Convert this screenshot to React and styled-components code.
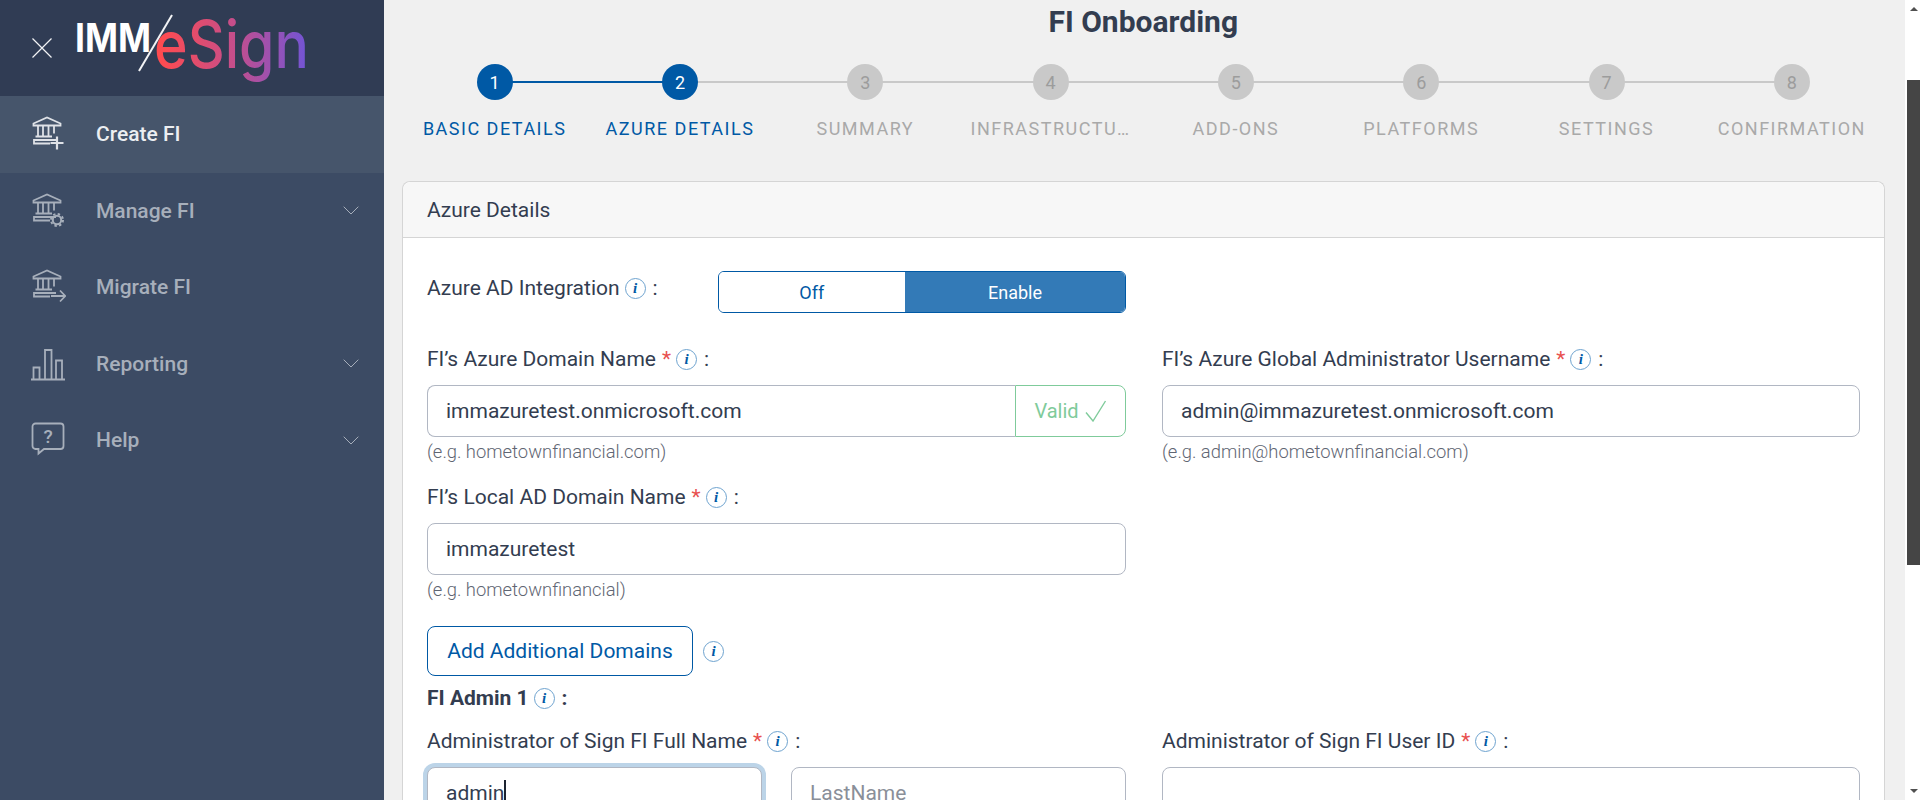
import React from 'react';
import styled, { createGlobalStyle } from 'styled-components';

const GlobalStyle = createGlobalStyle`
  html, body {
    margin: 0;
    height: 100%;
    overflow: hidden;
    background: #f0f0f0;
    font-family: Roboto, "Liberation Sans", sans-serif;
  }
  * {
    box-sizing: border-box;
  }
`;

const Shell = styled.div`
  display: flex;
  height: 800px;
  overflow: hidden;
`;

const Sidebar = styled.aside`
  width: 384px;
  flex-shrink: 0;
  background: #3c4b64;
`;

const SidebarHeader = styled.div`
  height: 96px;
  display: flex;
  align-items: center;
  padding-left: 32px;
  background: #303c54;
`;

const Logo = styled.svg`
  display: block;
  margin-left: 18px;
  overflow: visible;
`;

const NavItem = styled.div`
  height: 76.5px;
  display: flex;
  align-items: center;
  padding: 0 25px 0 30px;
  font-size: 21px;
  font-weight: 500;
  color: ${p => (p.$active ? '#eceef1' : '#a7afbb')};
  background: ${p => (p.$active ? '#46556b' : 'transparent')};
`;

const NavIcon = styled.span`
  width: 66px;
  height: 36px;
  flex-shrink: 0;
  display: flex;
  align-items: center;
`;

const NavChevron = styled.svg`
  margin-left: auto;
`;

const Main = styled.main`
  flex: 1;
  min-width: 0;
  padding: 0 20.5px 0 18px;
  overflow: hidden;
`;

const Title = styled.h1`
  margin: 0;
  height: 64px;
  padding-top: 4px;
  text-align: center;
  font-size: 30px;
  line-height: 36px;
  font-weight: 700;
  color: #333d50;
`;

const Stepper = styled.div`
  display: grid;
  grid-template-columns: repeat(8, 1fr);
  height: 117px;
`;

const Step = styled.div`
  position: relative;
  display: flex;
  flex-direction: column;
  align-items: center;
  min-width: 0;

  &:not(:last-child)::after {
    content: '';
    position: absolute;
    top: 17px;
    left: 50%;
    width: 100%;
    height: 2px;
    background: ${p => (p.$lineDone ? '#0059a5' : '#c9c9c9')};
  }
`;

const StepCircle = styled.div`
  position: relative;
  z-index: 1;
  width: 36px;
  height: 36px;
  border-radius: 50%;
  display: flex;
  align-items: center;
  justify-content: center;
  font-size: 18px;
  background: ${p => (p.$done ? '#0059a5' : '#c9c9c9')};
  color: ${p => (p.$done ? '#ffffff' : '#9c9c9c')};
`;

const StepLabel = styled.div`
  margin-top: 17px;
  white-space: nowrap;
  font-size: 18px;
  line-height: 24px;
  letter-spacing: 1.5px;
  color: ${p => (p.$done ? '#0059a5' : '#a9a9a9')};
`;

const Card = styled.section`
  background: #ffffff;
  border: 1px solid #d5d5d5;
  border-bottom: 0;
  border-radius: 8px 8px 0 0;
`;

const CardHeader = styled.div`
  height: 56px;
  display: flex;
  align-items: center;
  padding-left: 24px;
  font-size: 21px;
  color: #333d50;
  background: #f7f7f7;
  border-bottom: 1px solid #d5d5d5;
  border-radius: 8px 8px 0 0;
`;

const CardBody = styled.div`
  padding: 33px 23px 0 24px;
`;

const ToggleRow = styled.div`
  display: flex;
  align-items: flex-start;
  margin-bottom: 34px;
`;

const ToggleLabel = styled.div`
  width: 290.5px;
  display: flex;
  align-items: center;
  height: 34px;
  font-size: 21px;
  color: #333d50;
`;

const Toggle = styled.div`
  display: flex;
  height: 42px;
  width: 408.5px;
  border: 1px solid #0059a5;
  border-radius: 6px;
  overflow: hidden;
`;

const ToggleOption = styled.div`
  width: ${p => (p.$on ? '220.5px' : '187px')};
  display: flex;
  align-items: center;
  justify-content: center;
  font-size: 18px;
  background: ${p => (p.$on ? '#337ab7' : '#ffffff')};
  color: ${p => (p.$on ? '#ffffff' : '#0059a5')};
`;

const FieldGrid = styled.div`
  display: grid;
  grid-template-columns: 699px 698px;
  column-gap: 36px;
  row-gap: 21px;
`;

const Label = styled.div`
  display: flex;
  align-items: center;
  height: 24px;
  margin-bottom: 14px;
  font-size: 21px;
  font-weight: ${p => (p.$bold ? 700 : 400)};
  color: #333d50;
  white-space: nowrap;
`;

const Required = styled.span`
  margin-left: 6px;
  color: #e8514f;
`;

const InfoBadge = styled.span`
  width: 21px;
  height: 21px;
  margin: 0 7px 0 5px;
  flex-shrink: 0;
  display: inline-flex;
  align-items: center;
  justify-content: center;
  border: 1px solid #6ea3cf;
  border-radius: 50%;
  font-family: "Liberation Serif", serif;
  font-size: 15px;
  font-style: italic;
  font-weight: 700;
  color: #0059a5;
`;

const Input = styled.div`
  flex: 1;
  height: 52px;
  display: flex;
  align-items: center;
  padding: 0 18px;
  font-size: 21px;
  color: ${p => (p.$placeholder ? '#8a8f99' : '#333d50')};
  background: #ffffff;
  border: 1px solid #b1b7c3;
  border-radius: 8px;
  box-shadow: ${p => (p.$focused ? '0 0 0 4px #bcd4e8' : 'none')};
`;

const InputGroup = styled.div`
  display: flex;
  height: 52px;

  ${Input} {
    border-right: 0;
    border-radius: 8px 0 0 8px;
  }
`;

const ValidAddon = styled.div`
  width: 111px;
  display: flex;
  align-items: center;
  justify-content: center;
  gap: 6px;
  font-size: 20px;
  color: #7fcb9b;
  border: 1px solid #7fcb9b;
  border-radius: 0 8px 8px 0;
`;

const Hint = styled.div`
  margin-top: 3px;
  font-size: 18.4px;
  line-height: 24px;
  font-weight: 300;
  color: #5f6673;
`;

const ButtonRow = styled.div`
  display: flex;
  align-items: center;
  margin-top: 24px;
`;

const OutlineButton = styled.button`
  width: 266px;
  height: 50px;
  padding: 0;
  font-family: inherit;
  font-size: 21px;
  color: #0059a5;
  background: #ffffff;
  border: 1px solid #0059a5;
  border-radius: 8px;
`;

const ButtonInfo = styled(InfoBadge)`
  margin-left: 10px;
`;

const SectionTitle = styled(Label)`
  margin: 10px 0 19px;
`;

const NameInputs = styled.div`
  display: flex;
  gap: 29px;
`;

const Caret = styled.span`
  width: 2px;
  height: 26px;
  background: #1d2430;
`;

const ScrollTrack = styled.div`
  width: 15px;
  flex-shrink: 0;
  display: flex;
  flex-direction: column;
  align-items: flex-end;
  background: #ffffff;
`;

const ScrollArrow = styled.div`
  width: 13px;
  height: ${p => (p.$down ? '235px' : '80px')};
  display: flex;
  justify-content: center;
  align-items: ${p => (p.$down ? 'flex-end' : 'flex-start')};
  padding: 7px 0;

  &::before {
    content: '';
    border-left: 4px solid transparent;
    border-right: 4px solid transparent;
    ${p => (p.$down ? 'border-top: 4px solid #505050;' : 'border-bottom: 4px solid #505050;')}
  }
`;

const ScrollThumb = styled.div`
  width: 13px;
  height: 485px;
  background: #454545;
`;

const BankBase = () => (
  <>
    <path d="M3.500 7.500 17 1.500l13.500 6v2h-27z" />
    <path d="M8 9.500v11M13 9.500v11M18.500 9.500v11M24 9.500v8M5.500 20.500H22" />
    <path d="M26 24H4v3.500h16" />
  </>
);

const IconFrame = ({ children, color }) => (
  <svg width="36" height="36" viewBox="0 0 36 36" fill="none" stroke={color} strokeWidth="1.8">
    {children}
  </svg>
);

const CreateIcon = ({ color }) => (
  <IconFrame color={color}>
    <BankBase />
    <path d="M27 20.500v13M20.500 27h13" strokeWidth="2.200" />
  </IconFrame>
);

const ManageIcon = ({ color }) => (
  <IconFrame color={color}>
    <BankBase />
    <circle cx="27" cy="27" r="4.200" strokeWidth="2" />
    <circle cx="27" cy="27" r="6" strokeWidth="2" strokeDasharray="2.400 2.310" />
  </IconFrame>
);

const MigrateIcon = ({ color }) => (
  <IconFrame color={color}>
    <BankBase />
    <path d="M21 27h14M30 21.500l5.300 5.500-5.300 5.500" />
  </IconFrame>
);

const ReportIcon = ({ color }) => (
  <IconFrame color={color}>
    <path d="M1 33.500h34M3.500 33V21.500h6V33M15 33V4h6.500v29M26 33V14.500h6V33" />
  </IconFrame>
);

const HelpIcon = ({ color }) => (
  <IconFrame color={color}>
    <path d="M5.500 1.500h25a3 3 0 0 1 3 3V24a3 3 0 0 1-3 3H14l-5.500 4.500V27h-3a3 3 0 0 1-3-3V4.500a3 3 0 0 1 3-3z" />
    <text x="18" y="21" textAnchor="middle" fontSize="19" fontFamily="Roboto, sans-serif" fill={color} stroke="none">?</text>
  </IconFrame>
);

const Chevron = () => (
  <NavChevron width="16" height="9" viewBox="0 0 16 9" fill="none" stroke="#a7afbb" strokeWidth="1">
    <path d="M.7.7 8 8l7.300-7.300" />
  </NavChevron>
);

const navItems = [
  { label: 'Create FI', Icon: CreateIcon, active: true },
  { label: 'Manage FI', Icon: ManageIcon, chevron: true },
  { label: 'Migrate FI', Icon: MigrateIcon },
  { label: 'Reporting', Icon: ReportIcon, chevron: true },
  { label: 'Help', Icon: HelpIcon, chevron: true },
];

const steps = [
  'BASIC DETAILS',
  'AZURE DETAILS',
  'SUMMARY',
  'INFRASTRUCTU…',
  'ADD-ONS',
  'PLATFORMS',
  'SETTINGS',
  'CONFIRMATION',
];

const Info = () => <InfoBadge>i</InfoBadge>;

const FieldLabel = ({ children }) => (
  <Label>
    {children}
    <Required>*</Required>
    <Info />:
  </Label>
);

const App = () => (
  <Shell>
    <GlobalStyle />
    <Sidebar>
      <SidebarHeader>
        <svg width="20" height="20" viewBox="0 0 20 20" stroke="#f2f3f5" strokeWidth="1.200">
          <path d="M.5.5l19 19M19.500.5l-19 19" />
        </svg>
        <Logo width="250" height="96" viewBox="0 0 250 96">
          <defs>
            <linearGradient id="esign" gradientUnits="userSpaceOnUse" x1="90" y1="0" x2="240" y2="0">
              <stop offset="0" stopColor="#ff4b4f" />
              <stop offset="0.5" stopColor="#c44e8c" />
              <stop offset="1" stopColor="#6f55d8" />
            </linearGradient>
          </defs>
          <text x="5" y="52" fontFamily="Inter, sans-serif" fontWeight="700" fontSize="40" fill="#fff" textLength="76" lengthAdjust="spacingAndGlyphs">IMM</text>
          <path d="M102 15 69 71" stroke="#f2f3f5" strokeWidth="2" />
          <text x="84" y="68" fontFamily="Inter, sans-serif" fontWeight="500" fontSize="66" fill="url(#esign)" textLength="155" lengthAdjust="spacingAndGlyphs">eSign</text>
        </Logo>
      </SidebarHeader>
      {navItems.map(({ label, Icon, active, chevron }) => (
        <NavItem key={label} $active={active}>
          <NavIcon><Icon color={active ? '#dfe2e7' : '#a7afbb'} /></NavIcon>
          {label}
          {chevron && <Chevron />}
        </NavItem>
      ))}
    </Sidebar>

    <Main>
      <Title>FI Onboarding</Title>
      <Stepper>
        {steps.map((name, i) => (
          <Step key={name} $lineDone={i === 0}>
            <StepCircle $done={i < 2}>{i + 1}</StepCircle>
            <StepLabel $done={i < 2}>{name}</StepLabel>
          </Step>
        ))}
      </Stepper>

      <Card>
        <CardHeader>Azure Details</CardHeader>
        <CardBody>
          <ToggleRow>
            <ToggleLabel>Azure AD Integration<Info />:</ToggleLabel>
            <Toggle>
              <ToggleOption>Off</ToggleOption>
              <ToggleOption $on>Enable</ToggleOption>
            </Toggle>
          </ToggleRow>

          <FieldGrid>
            <div>
              <FieldLabel>FI’s Azure Domain Name</FieldLabel>
              <InputGroup>
                <Input>immazuretest.onmicrosoft.com</Input>
                <ValidAddon>
                  Valid
                  <svg width="22" height="22" viewBox="0 0 22 22" fill="none" stroke="#7fcb9b" strokeWidth="1.400">
                    <path d="M1 12.500 8 21 20.500 1" />
                  </svg>
                </ValidAddon>
              </InputGroup>
              <Hint>(e.g. hometownfinancial.com)</Hint>
            </div>
            <div>
              <FieldLabel>FI’s Azure Global Administrator Username</FieldLabel>
              <Input>admin@immazuretest.onmicrosoft.com</Input>
              <Hint>(e.g. admin@hometownfinancial.com)</Hint>
            </div>
            <div>
              <FieldLabel>FI’s Local AD Domain Name</FieldLabel>
              <Input>immazuretest</Input>
              <Hint>(e.g. hometownfinancial)</Hint>
            </div>
          </FieldGrid>

          <ButtonRow>
            <OutlineButton>Add Additional Domains</OutlineButton>
            <ButtonInfo>i</ButtonInfo>
          </ButtonRow>

          <SectionTitle $bold>FI Admin 1<Info />:</SectionTitle>

          <FieldGrid>
            <div>
              <FieldLabel>Administrator of Sign FI Full Name</FieldLabel>
              <NameInputs>
                <Input $focused>admin<Caret /></Input>
                <Input $placeholder>LastName</Input>
              </NameInputs>
            </div>
            <div>
              <FieldLabel>Administrator of Sign FI User ID</FieldLabel>
              <Input />
            </div>
          </FieldGrid>
        </CardBody>
      </Card>
    </Main>

    <ScrollTrack>
      <ScrollArrow />
      <ScrollThumb />
      <ScrollArrow $down />
    </ScrollTrack>
  </Shell>
);

export default App;
